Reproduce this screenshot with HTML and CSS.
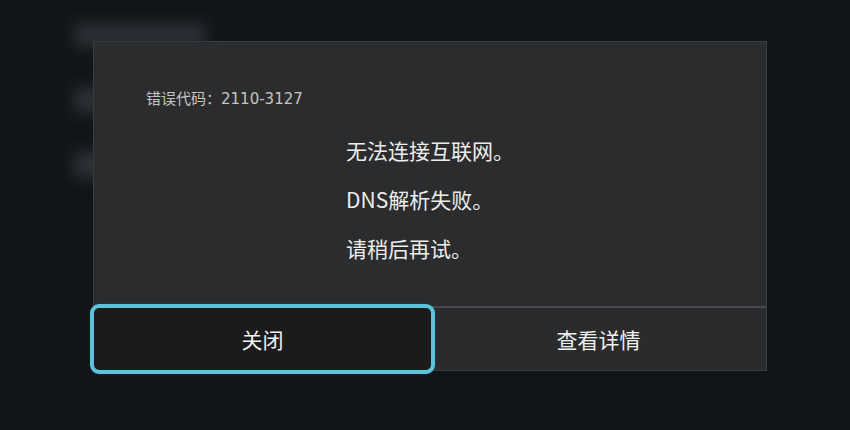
FILE: index.html
```html
<!DOCTYPE html>
<html lang="zh-CN">
<head>
<meta charset="utf-8">
<title>错误</title>
<link rel="stylesheet" href="styles.css">
</head>
<body>
<div class="backdrop">
  <div class="ghost ghost-a"></div>
  <div class="ghost ghost-b"></div>
  <div class="ghost ghost-c"></div>
</div>
<div class="dialog">
  <div class="dialog-body">
    <div class="code">错误代码：<span class="code-num">2110-3127</span></div>
    <div class="message">
      <p>无法连接互联网。</p>
      <p>DNS解析失败。</p>
      <p>请稍后再试。</p>
    </div>
  </div>
  <div class="actions">
    <button class="btn btn-focus">关闭</button>
    <button class="btn">查看详情</button>
  </div>
</div>
</body>
</html>
```

FILE: styles.css
```css
html, body {
  margin: 0;
  padding: 0;
}
body {
  width: 850px;
  height: 430px;
  background: #121518;
  font-family: "Noto Sans CJK SC", "Noto Sans", sans-serif;
  overflow: hidden;
  position: relative;
}
.backdrop {
  display: flex;
  flex-direction: column;
  align-items: flex-start;
  padding: 24px 0 0 74px;
  gap: 40px;
  filter: blur(7px);
}
.ghost {
  background: #2d3137;
  height: 22px;
  border-radius: 4px;
}
.ghost-a { width: 132px; }
.ghost-b { width: 110px; height: 24px; margin-top: 2px; }
.ghost-c { width: 90px; height: 26px; }

.dialog {
  position: absolute;
  left: 93px;
  top: 41px;
  width: 674px;
  height: 330px;
  box-sizing: border-box;
  background: #2b2c2e;
  border: 1px solid #3b3c3f;
  display: flex;
  flex-direction: column;
}
.dialog-body {
  height: 266px;
  padding: 46px 0 0 52px;
  box-sizing: border-box;
  border-bottom: 2px solid #48494c;
}
.code {
  font-size: 15px;
  line-height: 20px;
  color: #c4c4c4;
}
.code-num {
  font-family: "DejaVu Sans", "Noto Sans", sans-serif;
  font-size: 15px;
}
.message {
  margin-top: 17px;
  padding-left: 200px;
  color: #ededed;
  font-size: 21px;
}
.message p {
  margin: 0;
  line-height: 49px;
}
.actions {
  flex: 1;
  display: flex;
}
.btn {
  flex: 1;
  border: none;
  background: #2a2b2d;
  color: #f0f0f0;
  font-family: "Noto Sans CJK SC", "Noto Sans", sans-serif;
  font-size: 21px;
  padding: 0;
  margin: 0;
}
.btn-focus {
  flex: 0 0 337px;
  background: #1b1b1c;
  outline: 4px solid #5cc3dc;
  outline-offset: 0;
  border-radius: 5px;
  box-shadow: 0 0 6px rgba(92, 195, 220, 0.5);
  position: relative;
  z-index: 1;
}
```
